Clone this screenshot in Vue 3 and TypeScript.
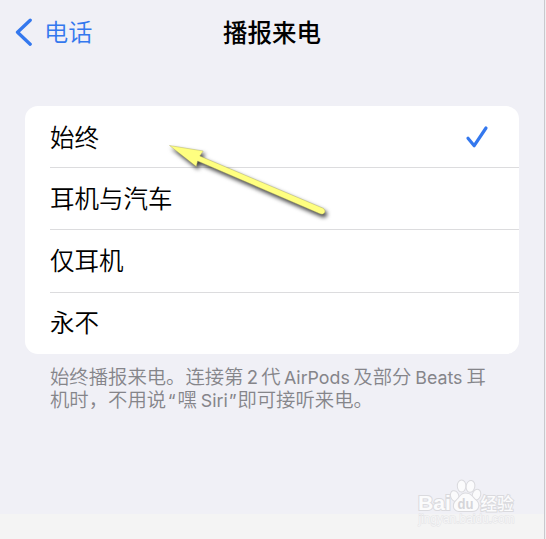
<script setup lang="ts">
import { ref } from 'vue'

const options: string[] = ['始终', '耳机与汽车', '仅耳机', '永不']
const selected = ref<string>('始终')
</script>

<template>
  <div class="screen">
    <main class="page">
      <header class="nav">
        <button class="back" type="button">
          <svg class="chevron" width="18" height="28" viewBox="0 0 18 28">
            <path d="M16.2 2.2 3.5 14.2 16.2 26.2" />
          </svg>
          <span>电话</span>
        </button>
        <h1 class="title">播报来电</h1>
      </header>
      <ul class="list">
        <li v-for="option in options" :key="option" class="row" @click="selected = option">
          <span>{{ option }}</span>
          <svg v-if="option === selected" class="check" width="24" height="24" viewBox="0 0 24 24">
            <path d="M3 13.3 9.2 20.7 21 3" />
          </svg>
        </li>
      </ul>
      <div class="note">
        <p>始终播报来电。连接第<span class="latin digit">2</span>代<span class="latin airpods">AirPods</span>及部分<span class="latin beats">Beats</span>耳</p>
        <p>机时，不用说<span class="latin open-quote">“</span>嘿<span class="latin siri">Siri</span><span class="latin close-quote">”</span>即可接听来电。</p>
      </div>
    </main>
    <div class="strip"></div>

    <svg class="arrow" width="180" height="90" viewBox="0 0 180 90">
      <path d="M8.5 15.5 42.2 21 38.8 26 162.6 78.4Q164.8 80.5 163.6 82.8 162 85 159 83.8L36.6 31 35.3 36.5Z" />
    </svg>

    <svg class="watermark" width="108" height="54" viewBox="0 0 108 54">
      <g class="mark">
        <text class="brand" x="4" y="34" textLength="33" lengthAdjust="spacingAndGlyphs">Bai</text>
        <ellipse cx="40.7" cy="20" rx="3.6" ry="5" transform="rotate(-20 40.7 20)" />
        <ellipse cx="47.6" cy="10" rx="3.8" ry="5.5" />
        <ellipse cx="56.5" cy="10.4" rx="3.8" ry="5.5" transform="rotate(10 56.5 10.4)" />
        <ellipse cx="62.5" cy="18.7" rx="3.6" ry="5" transform="rotate(20 62.5 18.7)" />
        <path d="M51.5 17.5c-5 0-5.5 4-9 7-4 3.5-3.5 10 2.5 10.5h13c7 0 8-7 4-10.5-4-3.5-5-7-10.5-7Z" />
        <text class="cjk" x="66.5" y="33.5" textLength="33" lengthAdjust="spacingAndGlyphs">经验</text>
      </g>
      <text class="du" x="43.5" y="33" textLength="16" lengthAdjust="spacingAndGlyphs">du</text>
      <text class="site" x="4.5" y="47" textLength="96" lengthAdjust="spacingAndGlyphs">jingyan.baidu.com</text>
    </svg>
  </div>
</template>

<style>
body {
  margin: 0;
  overflow: hidden;
}
</style>

<style scoped>
.screen {
  position: relative;
  box-sizing: border-box;
  width: 546px;
  height: 539px;
  display: flex;
  flex-direction: column;
  overflow: hidden;
  background: #f0f0f6;
  border-right: 1px solid #f0f0f2;
  box-shadow: inset -1px 0 #c9c9cd;
  color: #000;
}
.page {
  height: 514px;
}
.nav {
  box-sizing: border-box;
  display: grid;
  grid-template-columns: 1fr auto 1fr;
  align-items: center;
  height: 64px;
  padding: 0 15px 0 14px;
}
.back {
  display: flex;
  align-items: center;
  gap: 12px;
  padding: 0 0 2px;
  border: 0;
  background: none;
  color: #3478ee;
  font: 350 24.2px/36px "Noto Sans CJK SC", sans-serif;
}
.chevron {
  margin-top: 2px;
  fill: none;
  stroke: #3478ee;
  stroke-width: 3.3;
  stroke-linecap: round;
  stroke-linejoin: round;
}
.title {
  margin: 0;
  font: 500 24.5px/36px "Noto Sans CJK SC", sans-serif;
}
.list {
  list-style: none;
  margin: 42px 26px 0 25px;
  padding: 0;
  height: 248px;
  border-radius: 13px;
  background: #fff;
}
.row {
  box-sizing: border-box;
  display: flex;
  align-items: center;
  justify-content: space-between;
  height: 62.4px;
  margin-left: 25px;
  padding: 0 30px 2px 0;
  font: 350 24.5px/36px "Noto Sans CJK SC", sans-serif;
}
.row:first-child {
  height: 61px;
  padding-bottom: 0;
}
.row + .row {
  border-top: 1px solid #dcdcde;
}
.check {
  fill: none;
  stroke: #3478ee;
  stroke-width: 3.2;
  stroke-linecap: round;
  stroke-linejoin: round;
}
.note {
  margin: 11px 0 0 50px;
  color: #85858a;
}
.note p {
  height: 23px;
  margin: 0;
  white-space: nowrap;
  font: 350 19.35px/23px "Noto Sans CJK SC", sans-serif;
}
.latin {
  display: inline-block;
  font: 400 17.8px/20px Inter, sans-serif;
  text-align: center;
}
.digit {
  width: 17.7px;
  font-size: 18.5px;
}
.airpods {
  width: 72.8px;
}
.beats {
  width: 55.1px;
}
.open-quote {
  width: 11.4px;
}
.siri {
  width: 31px;
  text-align: right;
}
.close-quote {
  width: 9.6px;
}
.strip {
  flex: 1;
  margin-right: 1px;
  background: #f4f4f4;
}
.arrow {
  position: absolute;
  left: 161px;
  top: 130px;
  fill: #ffff80;
  stroke: #a6a65c;
  stroke-width: 0.4;
  filter: drop-shadow(2px 3px 2px rgba(0, 0, 0, 0.75));
}
.watermark {
  position: absolute;
  left: 414px;
  top: 476px;
}
.mark {
  fill: #fbfbfc;
  stroke: #dadade;
  stroke-width: 2;
  paint-order: stroke;
}
.brand {
  font: 700 21px "Liberation Sans", sans-serif;
}
.cjk {
  font: 500 17px "Noto Sans CJK SC", sans-serif;
}
.du {
  fill: #d5d5d9;
  font: 700 15px "Liberation Sans", sans-serif;
}
.site {
  fill: #f6f6f7;
  stroke: #e3e3e6;
  stroke-width: 1;
  paint-order: stroke;
  font: 400 12px "Liberation Sans", sans-serif;
}
</style>
